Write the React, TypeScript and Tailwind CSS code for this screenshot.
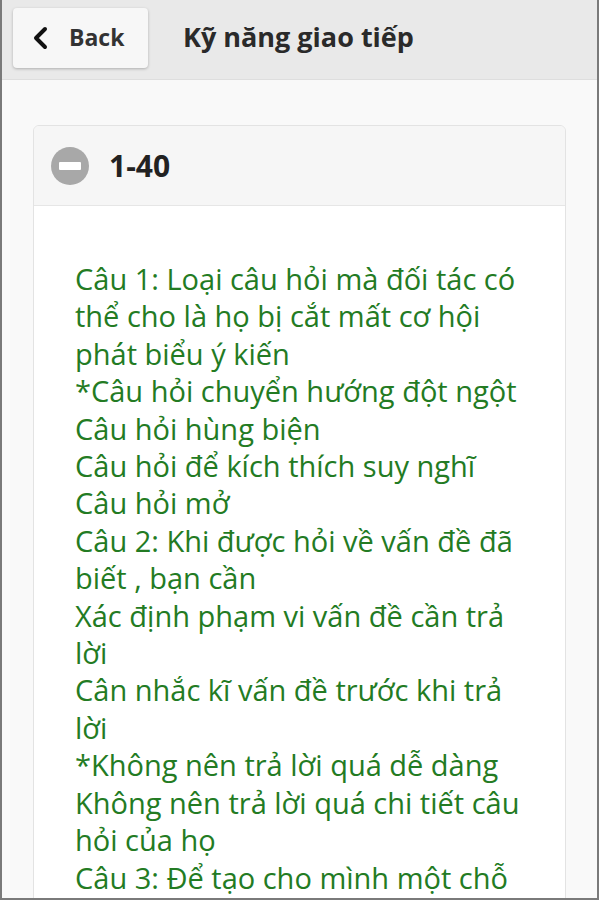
import React from 'react';

const lines = [
  'Câu 1: Loại câu hỏi mà đối tác có',
  'thể cho là họ bị cắt mất cơ hội',
  'phát biểu ý kiến',
  '*Câu hỏi chuyển hướng đột ngột',
  'Câu hỏi hùng biện',
  'Câu hỏi để kích thích suy nghĩ',
  'Câu hỏi mở',
  'Câu 2: Khi được hỏi về vấn đề đã',
  'biết , bạn cần',
  'Xác định phạm vi vấn đề cần trả',
  'lời',
  'Cân nhắc kĩ vấn đề trước khi trả',
  'lời',
  '*Không nên trả lời quá dễ dàng',
  'Không nên trả lời quá chi tiết câu',
  'hỏi của họ',
  'Câu 3: Để tạo cho mình một chỗ',
];

export default function App() {
  return (
    <div
      className="w-[599px] h-[900px] overflow-hidden bg-[#f9f9f9] border-l-2 border-r-2 border-b-2 border-[#7a7a7a] flex flex-col"
      style={{ fontFamily: '"Open Sans", "Noto Sans", sans-serif' }}
    >
      {/* top bar */}
      <div className="h-[80px] shrink-0 bg-[#e9e9e9] border-b border-[#dedede] flex items-center pl-[11px]">
        <button className="w-[135px] h-[60px] mt-[-4px] bg-[#f7f7f7] rounded-[4px] shadow-[0_1px_3px_rgba(0,0,0,0.25)] flex items-center pl-[19px]">
          <svg width="16" height="24" viewBox="0 0 16 24" className="mr-[21px]">
            <path d="M13 3 L4 12 L13 21" fill="none" stroke="#111" strokeWidth="4" strokeLinecap="round" strokeLinejoin="round" />
          </svg>
          <span className="text-[23px] font-bold text-[#333]">Back</span>
        </button>
        <h1 className="ml-[35px] mt-[-4px] text-[27px] font-bold text-[#2a2a2a]">Kỹ năng giao tiếp</h1>
      </div>

      {/* collapsible card */}
      <div className="px-[31px] pt-[45px]">
        <div className="border border-[#e3e3e3] rounded-t-[6px] overflow-hidden">
          <div className="h-[80px] bg-[#f6f6f6] border-b border-[#e6e6e6] flex items-center pl-[17px]">
            <div className="w-[38px] h-[38px] rounded-full bg-[#a8a8a8] flex items-center justify-center">
              <div className="w-[22px] h-[8px] bg-white rounded-[1px]" />
            </div>
            <span className="ml-[20px] text-[30px] font-bold text-[#222]">1-40</span>
          </div>
          <div className="bg-white pl-[41px] pt-[54px] pb-[20px] text-[29px] leading-[37.4px] text-[#237b23]">
            {lines.map((l, i) => (
              <div key={i} className="whitespace-nowrap">{l}</div>
            ))}
          </div>
        </div>
      </div>
    </div>
  );
}
